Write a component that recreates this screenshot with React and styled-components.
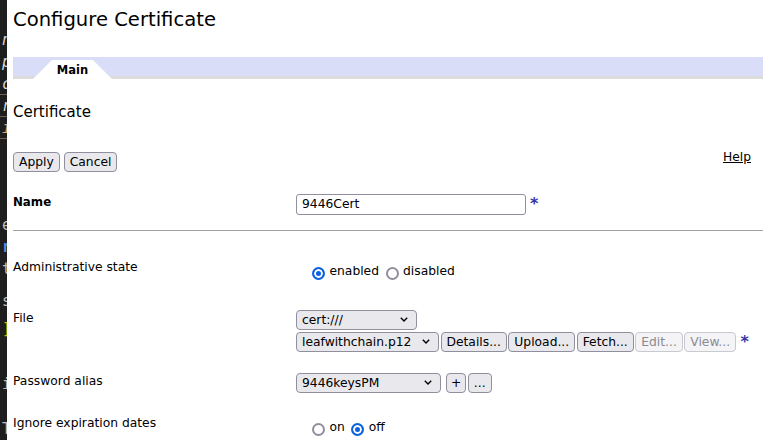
import React from "react";
import styled, { createGlobalStyle } from "styled-components";

const GlobalStyle = createGlobalStyle`
  html, body { margin: 0; padding: 0; background: #fff; }
  * { box-sizing: border-box; }
`;

const Page = styled.div`
  display: flex;
  min-height: 440px;
  height: 440px;
  overflow: hidden;
  background: #fff;
  font-family: "DejaVu Sans", Verdana, sans-serif;
  font-size: 12.3px;
  color: #000;
`;

const EditorStrip = styled.div`
  width: 7px;
  flex: none;
  background: #1e1e1e;
  overflow: hidden;
  display: flex;
  flex-direction: column;
  font-family: "DejaVu Sans Mono", monospace;
  font-size: 15px;
`;

const StripSpacer = styled.div`
  height: ${(p) => p.$h}px;
  flex: none;
`;

const StripGlyph = styled.div`
  height: 22px;
  flex: none;
  line-height: 22px;
  text-align: right;
  margin-right: -4px;
  white-space: nowrap;
  color: ${(p) => p.$color || "#c0c0c0"};
  font-style: ${(p) => (p.$italic ? "italic" : "normal")};
  font-weight: ${(p) => (p.$bold ? "bold" : "normal")};
  border-bottom: ${(p) => (p.$rule ? "1px solid #6e5f50" : "none")};
`;

const Content = styled.div`
  flex: 1;
  min-width: 0;
  padding-left: 6px;
  display: flex;
  flex-direction: column;
`;

const Title = styled.h1`
  margin: 8px 0 0;
  font-size: 19.6px;
  line-height: 23px;
  font-weight: normal;
`;

const TabBar = styled.div`
  margin-top: 26px;
  height: 22px;
  background: #d9ddf7;
  border-bottom: 3px solid #dcdcdc;
  display: flex;
  align-items: flex-end;
  padding-left: 20px;
`;

const Tab = styled.div`
  width: 79px;
  height: 19px;
  margin-bottom: -3px;
  background: #fff;
  clip-path: polygon(19px 0, 60px 0, 100% 100%, 0 100%);
  display: flex;
  align-items: center;
  justify-content: center;
  font-weight: bold;
  font-size: 11.5px;
`;

const SectionTitle = styled.h2`
  margin: 25px 0 0;
  font-size: 15px;
  line-height: 17.5px;
  font-weight: normal;
`;

const ActionBar = styled.div`
  margin-top: 30px;
  display: flex;
  align-items: flex-start;
  gap: 4px;
  padding-right: 12px;
`;

const Button = styled.button`
  height: 20px;
  padding: 0 ${(p) => (p.$px != null ? p.$px : 5)}px;
  border: 1px solid ${(p) => (p.disabled ? "#c9c9d0" : "#8f8f9d")};
  border-radius: 4px;
  background: ${(p) => (p.disabled ? "#f4f4f6" : "#e9e9ed")};
  color: ${(p) => (p.disabled ? "#8a8a90" : "#000")};
  font-family: inherit;
  font-size: 12.3px;
  line-height: 18px;
  white-space: nowrap;
  flex: none;
  margin: 0;
`;

const HelpLink = styled.a`
  margin-left: auto;
  margin-top: -2px;
  color: #000;
  text-decoration: underline;
  line-height: 15px;
`;

const Row = styled.div`
  display: grid;
  grid-template-columns: 283px 1fr;
  align-items: start;
  margin-top: ${(p) => p.$top}px;
`;

const Label = styled.div`
  padding-top: 1px;
  font-weight: ${(p) => (p.$bold ? "bold" : "normal")};
  font-size: ${(p) => (p.$bold ? "11.8px" : "12.3px")};
`;

const Value = styled.div`
  display: flex;
  align-items: flex-start;
`;

const Stack = styled.div`
  display: flex;
  flex-direction: column;
  gap: 2px;
`;

const Line = styled.div`
  display: flex;
  align-items: flex-start;
  gap: 1.5px;
`;

const TextInput = styled.input`
  width: 230px;
  height: 21px;
  border: 1px solid #8f8f9d;
  border-radius: 3px;
  padding: 0 5px;
  font-family: inherit;
  font-size: 12.3px;
  color: #000;
  background: #fff;
  outline: none;
  margin: 0;
`;

const Required = styled.span`
  color: #3535a8;
  font-weight: bold;
  font-size: 16px;
  line-height: 16px;
  margin-left: ${(p) => p.$ml || 4}px;
  margin-top: 2px;
`;

const Divider = styled.hr`
  margin: 15px 0 0;
  border: none;
  height: 1px;
  background: #a0a0a0;
`;

const SelectBox = styled.div`
  width: ${(p) => p.$w}px;
  height: 20px;
  flex: none;
  border: 1px solid #8f8f9d;
  border-radius: 4px;
  background: #e9e9ed;
  display: flex;
  align-items: center;
  justify-content: space-between;
  padding: 0 8px 0 5px;
  line-height: 18px;
  white-space: nowrap;
`;

const ExtraButtons = styled.div`
  display: flex;
  gap: 1.5px;
  margin-left: 5px;
`;

const RadioGroup = styled.div`
  display: flex;
  align-items: flex-start;
  gap: 6.5px;
  padding: 5px 0 0 16px;
`;

const RadioOption = styled.label`
  display: inline-flex;
  align-items: flex-start;
  gap: 4.5px;
  line-height: 14.3px;
`;

const Radio = styled.span`
  width: 13px;
  height: 13px;
  flex: none;
  margin-top: 3px;
  border-radius: 50%;
  border: 2px solid ${(p) => (p.$checked ? "#0b62e0" : "#8f8f9d")};
  background: ${(p) => (p.$checked ? "#0b62e0" : "#fff")};
  box-shadow: ${(p) => (p.$checked ? "inset 0 0 0 2px #fff" : "none")};
`;

const Chevron = () => (
  <svg width="8" height="5" viewBox="0 0 8 5" aria-hidden="true">
    <path d="M0.8 0.8 L4 4 L7.2 0.8" fill="none" stroke="#000" strokeWidth="1.4" />
  </svg>
);

const Select = ({ w, children }) => (
  <SelectBox $w={w}>
    <span>{children}</span>
    <Chevron />
  </SelectBox>
);

const RadioChoice = ({ checked, children }) => (
  <RadioOption>
    <Radio $checked={checked} />
    <span>{children}</span>
  </RadioOption>
);

const strip = [
  { s: 29 },
  { g: "n", i: true, c: "#d8d8d8" },
  { g: "p", i: true, c: "#d8d8d8" },
  { g: "c", i: true, c: "#d8d8d8", r: true },
  { g: "r", i: true, c: "#d8d8d8", r: true },
  { g: "i", i: true, c: "#c9a77c", r: true },
  { s: 75 },
  { g: "e", c: "#bdbdbd" },
  { g: "r", c: "#4f8fdc", b: true },
  { g: "t", c: "#bdbdbd" },
  { s: 10 },
  { g: "s", c: "#bdbdbd" },
  { s: 6 },
  { g: "]", c: "#c9b800" },
  { s: 33 },
  { g: "i", c: "#bdbdbd" },
  { s: 23 },
  { g: "T", c: "#bdbdbd" },
];

export default function App() {
  return (
    <>
      <GlobalStyle />
      <Page>
        <EditorStrip>
          {strip.map((e, k) =>
            e.s ? (
              <StripSpacer key={k} $h={e.s} />
            ) : (
              <StripGlyph key={k} $color={e.c} $italic={e.i} $bold={e.b} $rule={e.r}>
                {e.g}
              </StripGlyph>
            )
          )}
        </EditorStrip>
        <Content>
          <Title>Configure Certificate</Title>
          <TabBar>
            <Tab>Main</Tab>
          </TabBar>
          <SectionTitle>Certificate</SectionTitle>
          <ActionBar>
            <Button>Apply</Button>
            <Button>Cancel</Button>
            <HelpLink href="#">Help</HelpLink>
          </ActionBar>

          <Row $top={22}>
            <Label $bold>Name</Label>
            <Value>
              <TextInput defaultValue="9446Cert" readOnly />
              <Required>*</Required>
            </Value>
          </Row>

          <Divider />

          <Row $top={28}>
            <Label>Administrative state</Label>
            <RadioGroup>
              <RadioChoice checked>enabled</RadioChoice>
              <RadioChoice>disabled</RadioChoice>
            </RadioGroup>
          </Row>

          <Row $top={30}>
            <Label>File</Label>
            <Stack>
              <Select w={121}>cert:///</Select>
              <Line>
                <Select w={143}>leafwithchain.p12</Select>
                <Button>Details...</Button>
                <Button>Upload...</Button>
                <Button>Fetch...</Button>
                <Button disabled>Edit...</Button>
                <Button disabled>View...</Button>
                <Required $ml={3}>*</Required>
              </Line>
            </Stack>
          </Row>

          <Row $top={21}>
            <Label>Password alias</Label>
            <Value>
              <Select w={145}>9446keysPM</Select>
              <ExtraButtons>
                <Button $px={4}>+</Button>
                <Button $px={5}>...</Button>
              </ExtraButtons>
            </Value>
          </Row>

          <Row $top={22}>
            <Label>Ignore expiration dates</Label>
            <RadioGroup>
              <RadioChoice>on</RadioChoice>
              <RadioChoice checked>off</RadioChoice>
            </RadioGroup>
          </Row>
        </Content>
      </Page>
    </>
  );
}
